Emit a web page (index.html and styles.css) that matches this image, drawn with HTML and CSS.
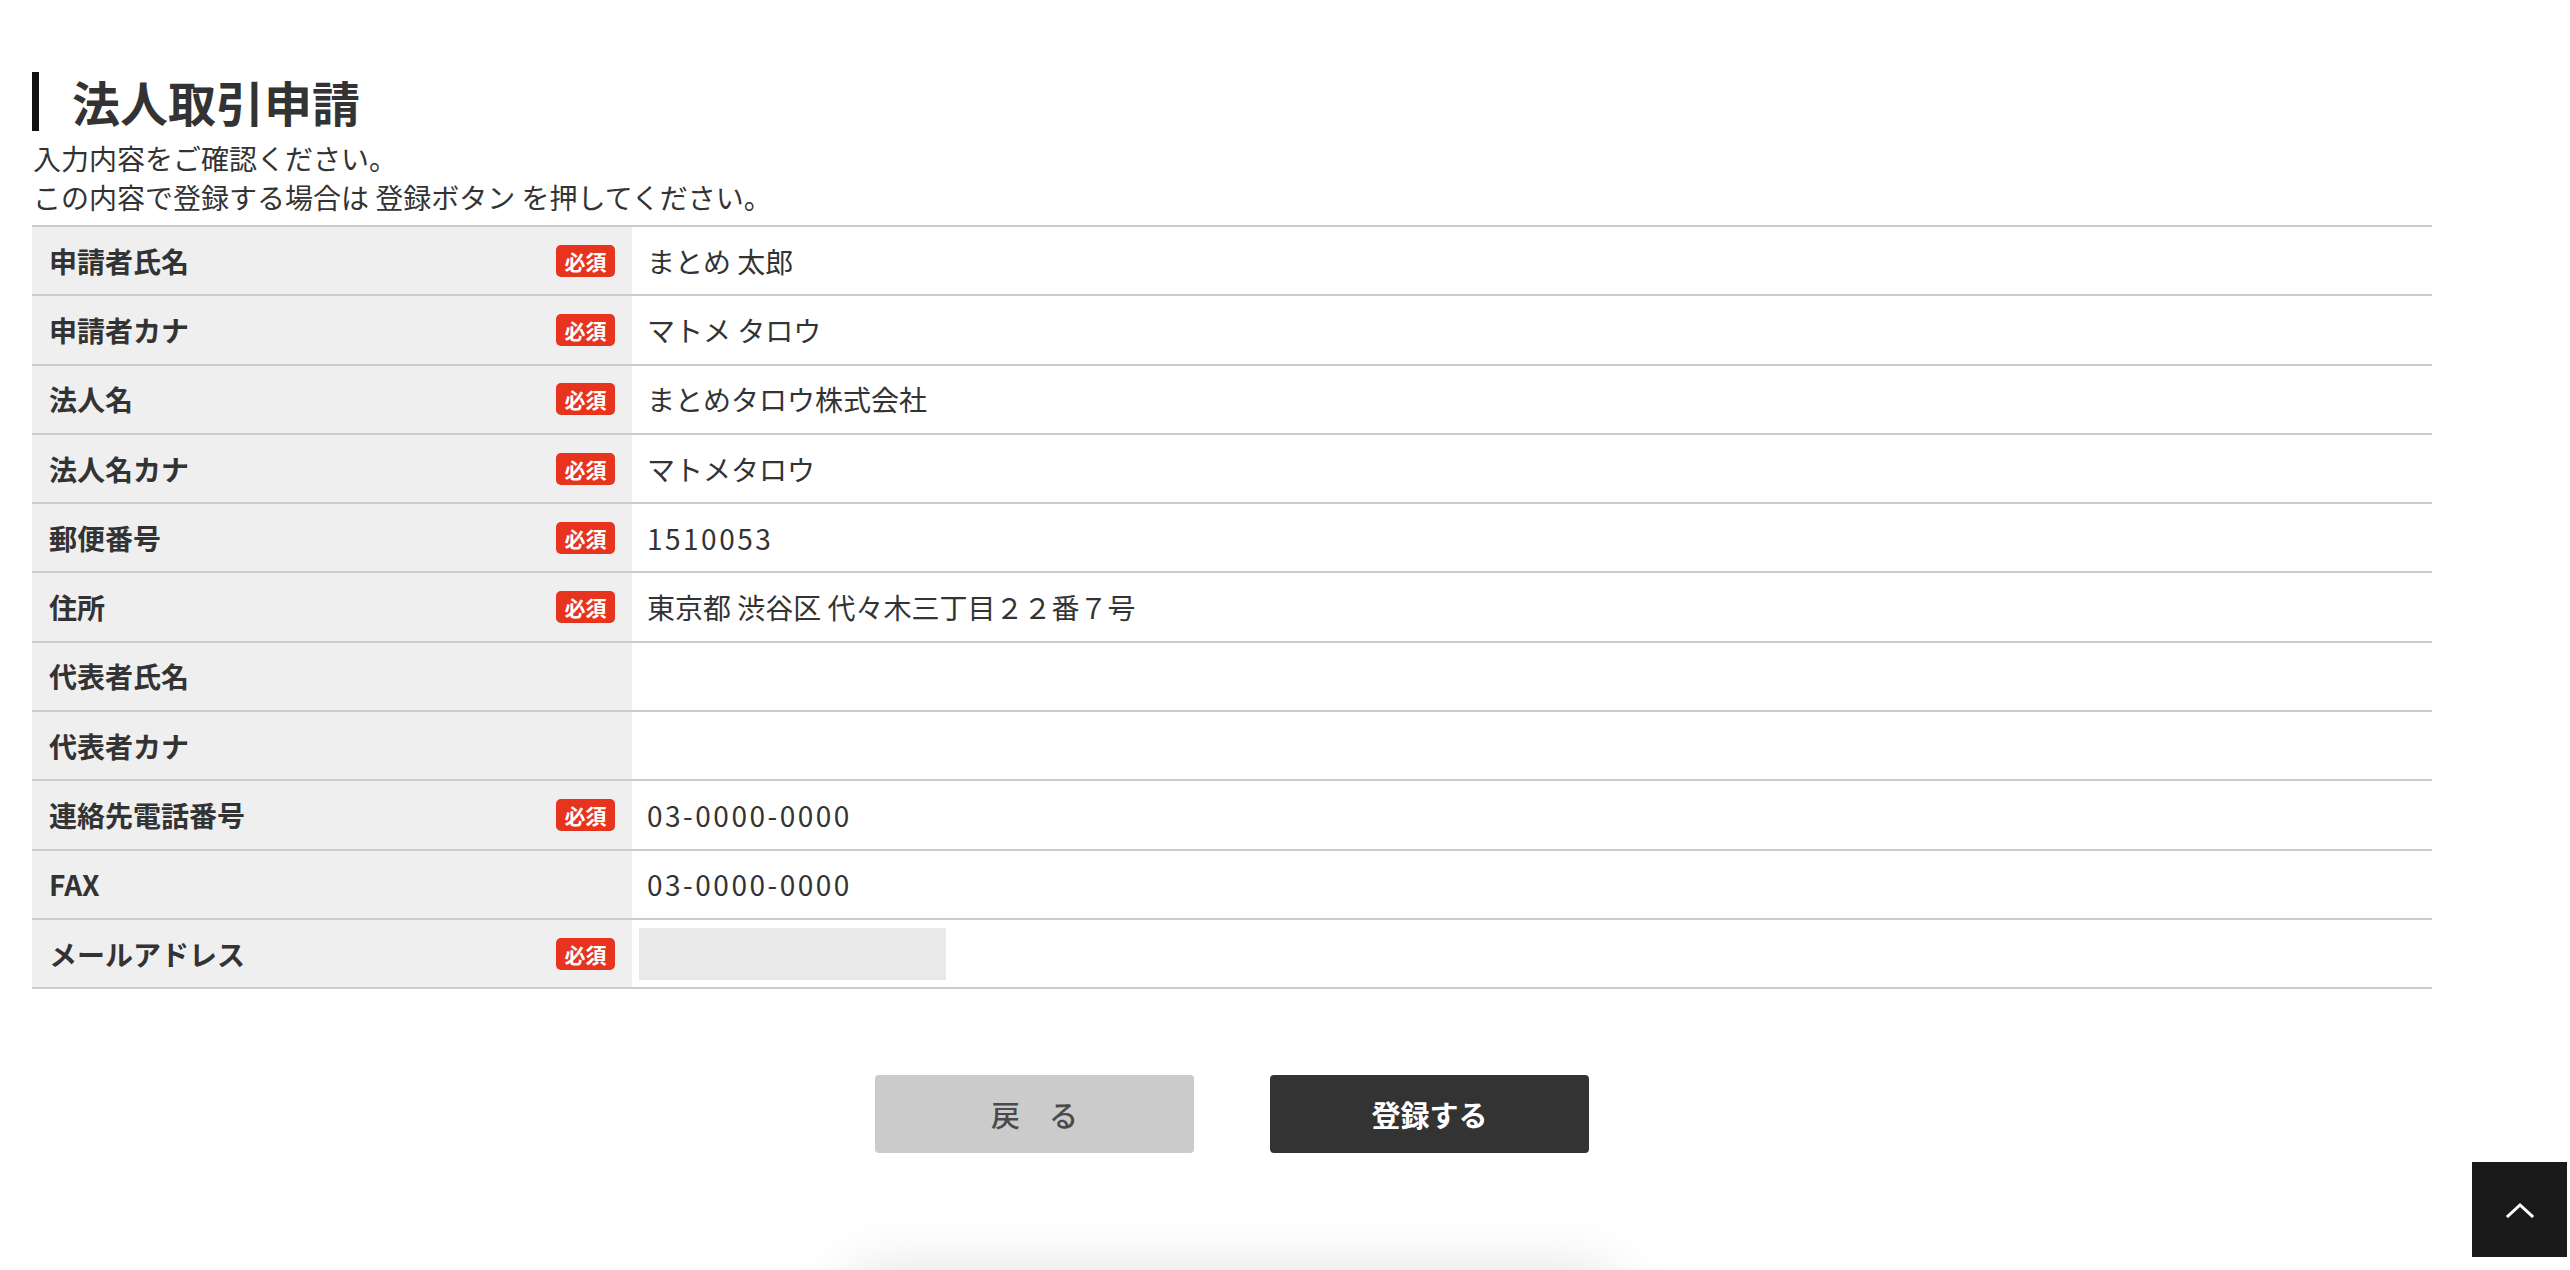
FILE: index.html
```html
<!DOCTYPE html>
<html lang="ja">
<head>
    <meta charset="UTF-8">
    <meta name="viewport" content="width=device-width, initial-scale=1.0">
    <title>法人取引申請</title>
    <link rel="stylesheet" href="styles.css">
</head>
<body>
    <div class="container">
        <h2 class="page-title">法人取引申請</h2>
        <p class="lead">入力内容をご確認ください。<br>この内容で登録する場合は 登録ボタン を押してください。</p>

        <div class="confirm-table">
            <div class="row">
                <div class="label">申請者氏名<span class="required">必須</span></div>
                <div class="value">まとめ 太郎</div>
            </div>
            <div class="row">
                <div class="label">申請者カナ<span class="required">必須</span></div>
                <div class="value">マトメ タロウ</div>
            </div>
            <div class="row">
                <div class="label">法人名<span class="required">必須</span></div>
                <div class="value">まとめタロウ株式会社</div>
            </div>
            <div class="row">
                <div class="label">法人名カナ<span class="required">必須</span></div>
                <div class="value">マトメタロウ</div>
            </div>
            <div class="row">
                <div class="label">郵便番号<span class="required">必須</span></div>
                <div class="value num">1510053</div>
            </div>
            <div class="row">
                <div class="label">住所<span class="required">必須</span></div>
                <div class="value">東京都 渋谷区 代々木三丁目２２番７号</div>
            </div>
            <div class="row">
                <div class="label">代表者氏名</div>
                <div class="value"></div>
            </div>
            <div class="row">
                <div class="label">代表者カナ</div>
                <div class="value"></div>
            </div>
            <div class="row">
                <div class="label">連絡先電話番号<span class="required">必須</span></div>
                <div class="value num">03-0000-0000</div>
            </div>
            <div class="row">
                <div class="label">FAX</div>
                <div class="value num">03-0000-0000</div>
            </div>
            <div class="row">
                <div class="label">メールアドレス<span class="required">必須</span></div>
                <div class="value value-mail"><span class="mail-box"></span></div>
            </div>
        </div>

        <div class="actions">
            <button class="btn btn-back">戻　る</button>
            <button class="btn btn-submit">登録する</button>
        </div>

        <div class="footer-shadow"></div>
    </div>

    <a class="page-top" href="#">
        <svg width="28" height="16" viewBox="0 0 28 16"><polyline points="2,14 14,3 26,14" fill="none" stroke="#fff" stroke-width="3" stroke-linecap="square"/></svg>
    </a>
</body>
</html>
```

FILE: styles.css
```css
body {
    margin: 0;
    font-family: "Noto Sans CJK JP", "Noto Sans", sans-serif;
    color: #333;
    background: #fff;
    overflow: hidden;
}
.container {
    width: 2400px;
    padding: 72px 0 0 32px;
}
.page-title {
    margin: 0;
    border-left: 7px solid #111;
    padding-left: 33px;
    font-size: 48px;
    line-height: 59px;
    font-weight: bold;
    color: #333;
}
.lead {
    margin: 8px 0 8px 1px;
    font-size: 28px;
    line-height: 39px;
    color: #333;
}
.confirm-table {
    border-top: 2px solid #ccc;
}
.row {
    display: flex;
    height: 67.3px;
    border-bottom: 2px solid #ccc;
}
.label {
    width: 600px;
    box-sizing: border-box;
    padding: 0 17px;
    background: #efefef;
    display: flex;
    align-items: center;
    justify-content: space-between;
    font-size: 28px;
    font-weight: bold;
    color: #333;
}
.required {
    width: 59px;
    height: 32px;
    line-height: 32px;
    border-radius: 5px;
    background: #e8331f;
    color: #fff;
    font-size: 21px;
    font-weight: bold;
    text-align: center;
}
.value {
    flex: 1;
    padding: 0 15px;
    display: flex;
    align-items: center;
    font-size: 28px;
    color: #333;
}
.num {
    letter-spacing: 2.5px;
}
.value-mail {
    padding-left: 7px;
}
.mail-box {
    width: 307px;
    height: 52px;
    background: #e9e9e9;
}
.actions {
    display: flex;
    justify-content: center;
    gap: 76px;
    margin-top: 86px;
}
.btn {
    width: 319px;
    height: 78px;
    border: none;
    border-radius: 4px;
    font-family: inherit;
    font-size: 29px;
    font-weight: bold;
    cursor: pointer;
}
.btn-back {
    background: #cbcbcb;
    color: #4a4a4a;
    font-weight: 500;
}
.btn-submit {
    background: #333;
    color: #fff;
}
.footer-shadow {
    width: 760px;
    height: 200px;
    margin: 128px auto 0;
    box-shadow: 0 -6px 60px rgba(0, 0, 0, 0.14);
}
.page-top {
    position: fixed;
    right: 3px;
    bottom: 13px;
    width: 95px;
    height: 95px;
    background: #1a1a1a;
    display: flex;
    align-items: center;
    justify-content: center;
}
```
